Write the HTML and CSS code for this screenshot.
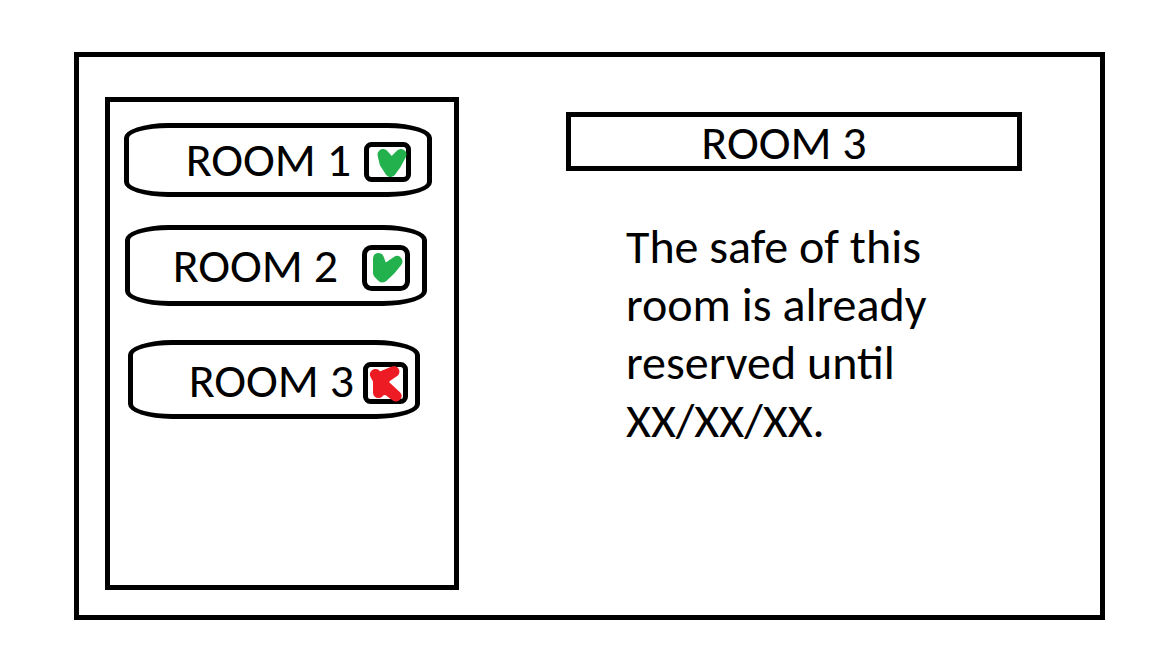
FILE: index.html
```
<!DOCTYPE html>
<html lang="en">
<head>
<meta charset="utf-8">
<meta name="viewport" content="width=device-width, initial-scale=1">
<title>Room safes</title>
<link rel="stylesheet" href="styles.css">
</head>
<body>
<main class="frame">
  <nav class="rooms" aria-label="Rooms">
    <button class="room room-one" type="button">
      <span>ROOM 1</span>
      <svg class="status" width="47" height="40" viewBox="0 0 47 40" role="img" aria-label="Available">
        <rect class="box" x="2.5" y="2.5" width="42" height="35" rx="5"/>
        <path class="mark free" d="M19 12.5L21 21L26.5 29.500L32 22L37 12.500L27.500 22Z"/>
      </svg>
    </button>
    <button class="room room-two" type="button">
      <span>ROOM 2</span>
      <svg class="status" width="48" height="46" viewBox="0 0 48 46" role="img" aria-label="Available">
        <rect class="box" x="2.5" y="2.5" width="43" height="41" rx="7"/>
        <path class="mark free" d="M16.500 13.500V28L20.500 32L28 25L35 16.500L21 26Z"/>
      </svg>
    </button>
    <button class="room room-three" type="button">
      <span>ROOM 3</span>
      <svg class="status" width="45" height="42" viewBox="0 0 45 42" role="img" aria-label="Reserved">
        <rect class="box" x="2.5" y="2.5" width="40" height="37" rx="5"/>
        <path class="mark taken" d="M12.500 12.500L15.500 18V30.500L19 27L25 28L33 34L19 21L23 15L31 9.500L20 14L17 18Z"/>
      </svg>
    </button>
  </nav>
  <section class="detail">
    <h1 class="title">ROOM 3</h1>
    <p class="message">The safe of this room is already reserved until XX/XX/XX.</p>
  </section>
</main>
</body>
</html>
```
FILE: styles.css
```
* {
  box-sizing: border-box;
}

body {
  display: flex;
  min-height: 100vh;
  margin: 0;
  padding: 52px 47px 28px 74px;
  background: #fff;
  color: #000;
  font-family: Calibri, Carlito, Lato, sans-serif;
  font-size: 48px;
}

.frame {
  flex: 1;
  display: grid;
  grid-template-columns: 354fr 456fr;
  gap: 107px;
  padding: 40px 78px 25px 26px;
  border: 5px solid #000;
}

.rooms {
  display: flex;
  flex-direction: column;
  padding: 21px 22px 21px 14px;
  border: 5px solid #000;
}

.room {
  display: flex;
  align-items: center;
  justify-content: flex-end;
  border: 5px solid #000;
  border-radius: 44px / 15px;
  background: #fff;
  color: inherit;
  font: inherit;
  line-height: 44px;
  white-space: nowrap;
  cursor: pointer;
}

.room span {
  padding-bottom: 4px;
}

.room-one {
  gap: 13px;
  min-height: 74px;
  padding: 4px 16px 0 0;
}

.room-two {
  gap: 24px;
  min-height: 81px;
  margin: 28px 5px 34px 1px;
  padding: 4px 12px 0 0;
}

.room-three {
  gap: 9px;
  min-height: 79px;
  margin: 0 12px 0 4px;
  padding: 6px 7px 0 0;
}

.status {
  flex: none;
}

.box {
  fill: #fff;
  stroke: #000;
  stroke-width: 5;
}

.mark {
  stroke-width: 11;
  stroke-linecap: round;
  stroke-linejoin: round;
}

.free {
  fill: #22b14c;
  stroke: #22b14c;
}

.taken {
  fill: #ed1c24;
  stroke: #ed1c24;
}

.title {
  margin: 15px 0 0;
  padding: 3px 20px 0 0;
  border: 5px solid #000;
  font-size: inherit;
  font-weight: 400;
  line-height: 46px;
  text-align: center;
}

.message {
  max-width: 390px;
  margin: 47px 0 0;
  padding-left: 60px;
  line-height: 58px;
}
```
